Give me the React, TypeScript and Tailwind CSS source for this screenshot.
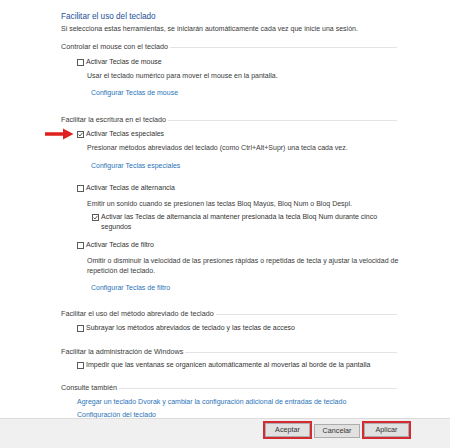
const font = { fontFamily: '"Liberation Sans", Arial, sans-serif' };

function Header({ text, className = "" }: { text: string; className?: string }) {
  return (
    <div className={`flex items-center h-[10px] mr-[8px] text-[7.2px] leading-[10px] text-[#3a3a3a] ${className}`}>
      <span className="whitespace-nowrap pr-[2px]">{text}</span>
      <div className="flex-1 h-px bg-[#e3e3e3]" />
    </div>
  );
}

function Box({ checked = false }: { checked?: boolean }) {
  return (
    <span className="w-[7px] h-[7px] border border-[#5a5a5a] bg-white shrink-0 flex items-center justify-center mt-[1.5px]">
      {checked && (
        <svg width="5" height="5" viewBox="0 0 5 5">
          <path d="M0.6 2.6 L2 4 L4.5 0.8" fill="none" stroke="#333" strokeWidth="0.8" />
        </svg>
      )}
    </span>
  );
}

function Check({ text, checked, className = "" }: { text: string; checked?: boolean; className?: string }) {
  return (
    <div className={`flex items-start gap-[2px] text-[7px] leading-[10px] text-[#333] ${className}`}>
      <Box checked={checked} />
      <span>{text}</span>
    </div>
  );
}

function Text({ children, className = "" }: { children: React.ReactNode; className?: string }) {
  return <div className={`text-[7px] leading-[10px] text-[#3a3a3a] ${className}`}>{children}</div>;
}

function Link({ children, className = "" }: { children: React.ReactNode; className?: string }) {
  return <div className={`text-[7px] leading-[10px] text-[#2a73b8] ${className}`}>{children}</div>;
}

function Btn({ label, marked }: { label: string; marked?: boolean }) {
  if (!marked)
    return (
      <div className="mt-[3px] w-[46px] h-[14px] bg-[#e1e1e1] border border-[#adadad] text-[7.2px] text-[#333] flex items-center justify-center">
        {label}
      </div>
    );
  return (
    <div className="border-2 border-[#d42a32] bg-[#f0f0f0]">
      <div className="w-[45px] h-[14px] bg-[#e1e1e1] border border-[#adadad] text-[7.2px] text-[#333] flex items-center justify-center">
        {label}
      </div>
    </div>
  );
}

export default function App() {
  return (
    <div className="w-[450px] h-[448px] bg-white relative overflow-hidden" style={font}>
      <div className="h-[418px] overflow-hidden pl-[61px] pr-[45px] pt-[10px] flex flex-col">
        <div className="text-[8.2px] leading-[14px] text-[#22509a]">Facilitar el uso del teclado</div>
        <Text>Si selecciona estas herramientas, se iniciarán automáticamente cada vez que inicie una sesión.</Text>

        <Header text="Controlar el mouse con el teclado" className="mt-[8px]" />
        <div className="pl-[16px] flex flex-col">
          <Check text="Activar Teclas de mouse" className="mt-[5px]" />
          <div className="pl-[10px] flex flex-col">
            <Text className="mt-[4px]">Usar el teclado numérico para mover el mouse en la pantalla.</Text>
            <Link className="mt-[7px] pl-[4px]">Configurar Teclas de mouse</Link>
          </div>
        </div>

        <Header text="Facilitar la escritura en el teclado" className="mt-[17px]" />
        <div className="pl-[16px] flex flex-col">
          <Check text="Activar Teclas especiales" checked className="mt-[4px]" />
          <div className="pl-[10px] flex flex-col">
            <Text className="mt-[4px]">Presionar métodos abreviados del teclado (como Ctrl+Alt+Supr) una tecla cada vez.</Text>
            <Link className="mt-[8px] pl-[4px]">Configurar Teclas especiales</Link>
          </div>

          <Check text="Activar Teclas de alternancia" className="mt-[12px]" />
          <div className="pl-[10px] flex flex-col">
            <Text className="mt-[6px]">Emitir un sonido cuando se presionen las teclas Bloq Mayús, Bloq Num o Bloq Despl.</Text>
            <Check
              text="Activar las Teclas de alternancia al mantener presionada la tecla Bloq Num durante cinco segundos"
              checked
              className="mt-[3px] pl-[5px] pr-[12px]"
            />
          </div>

          <Check text="Activar Teclas de filtro" className="mt-[8px]" />
          <div className="pl-[10px] flex flex-col">
            <Text className="mt-[6px]">
              Omitir o disminuir la velocidad de las presiones rápidas o repetidas de tecla y ajustar la velocidad de repetición del teclado.
            </Text>
            <Link className="mt-[7px] pl-[4px]">Configurar Teclas de filtro</Link>
          </div>
        </div>

        <Header text="Facilitar el uso del método abreviado de teclado" className="mt-[16px]" />
        <div className="pl-[16px] flex flex-col">
          <Check text="Subrayar los métodos abreviados de teclado y las teclas de acceso" className="mt-[4px]" />
        </div>

        <Header text="Facilitar la administración de Windows" className="mt-[14px]" />
        <div className="pl-[16px] flex flex-col">
          <Check text="Impedir que las ventanas se organicen automáticamente al moverlas al borde de la pantalla" className="mt-[3px]" />
        </div>

        <Header text="Consulte también" className="mt-[13px]" />
        <div className="pl-[16px] flex flex-col">
          <Link className="mt-[4px]">Agregar un teclado Dvorak y cambiar la configuración adicional de entradas de teclado</Link>
          <Link className="mt-[3px]">Configuración del teclado</Link>
        </div>
      </div>

      <div className="h-[30px] bg-[#f0f0f0] border-t border-[#dcdcdc] flex items-start justify-end pr-[39px] pt-[2px] gap-[2px]">
        <Btn label="Aceptar" marked />
        <Btn label="Cancelar" />
        <Btn label="Aplicar" marked />
      </div>

      {/* red annotation arrow */}
      <svg className="absolute left-[45px] top-[128px]" width="29" height="12" viewBox="0 0 29 12">
        <path d="M0 4.3 H18 V0.5 L28.5 6 L18 11.5 V7.7 H0 Z" fill="#e0201e" />
      </svg>
    </div>
  );
}
